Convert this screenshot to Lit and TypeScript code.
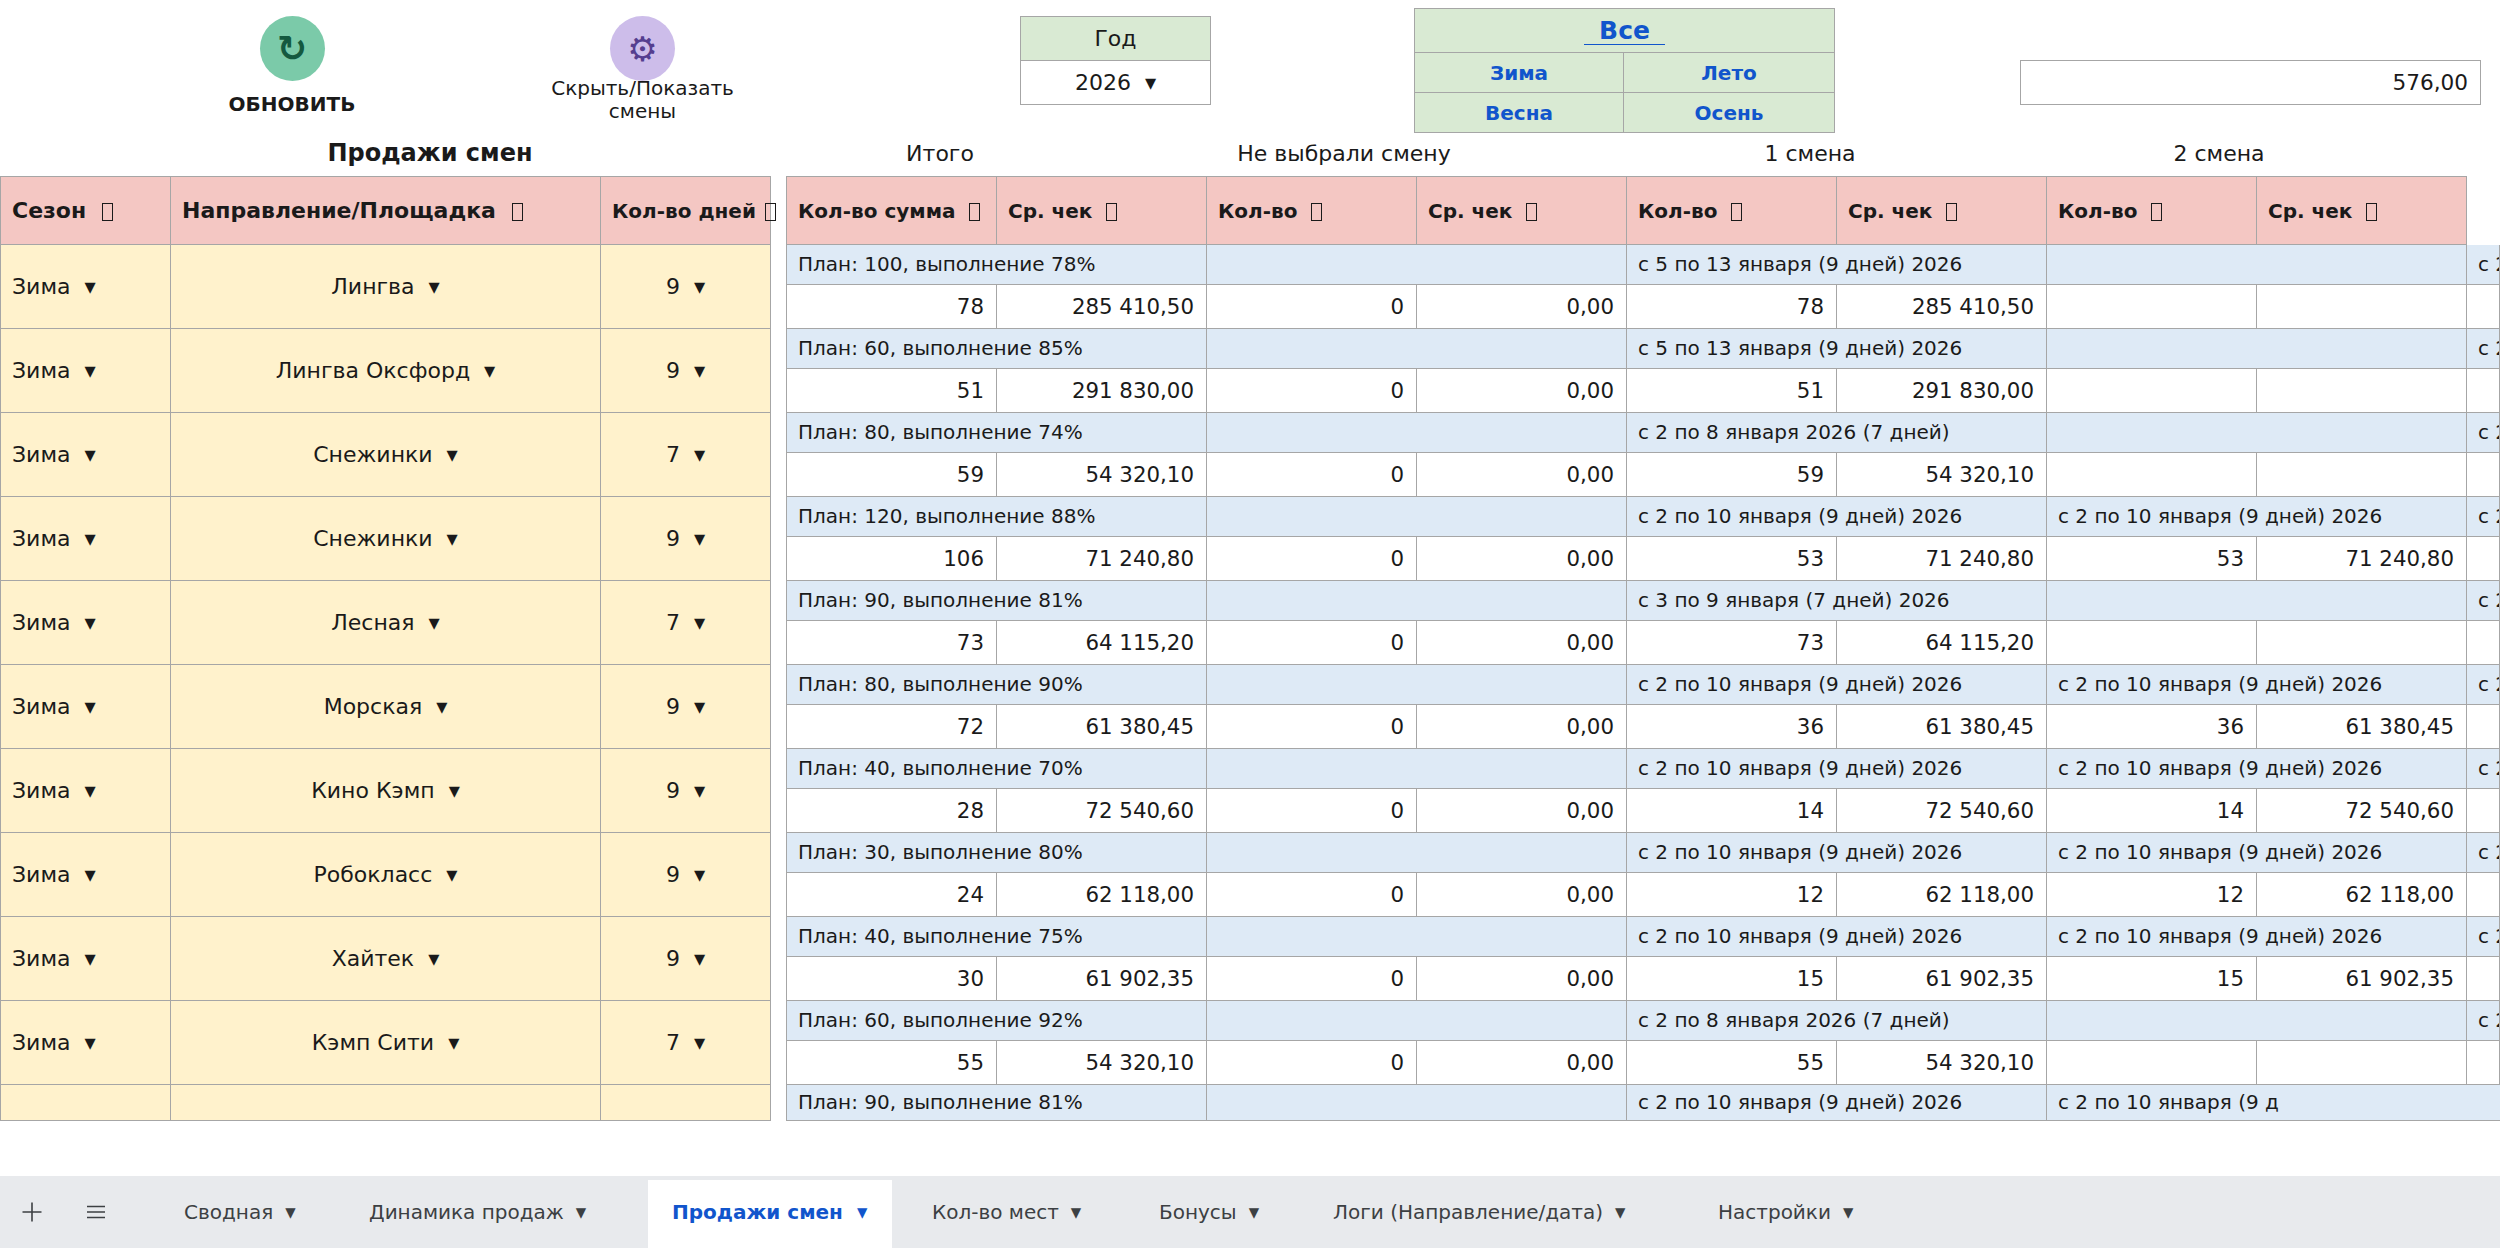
import { LitElement, html, css } from "lit";
import { customElement } from "lit/decorators.js";

type Row = { place: string; days: number; plan: number; pct: number; qty: number; avg: string; date: string; q1: number; q2?: number };
const D10 = "с 2 по 10 января (9 дней) 2026";
const D513 = "с 5 по 13 января (9 дней) 2026";
const D28 = "с 2 по 8 января 2026 (7 дней)";
const rows: Row[] = [
  { place: "Лингва", days: 9, plan: 100, pct: 78, qty: 78, avg: "285 410,50", date: D513, q1: 78 },
  { place: "Лингва Оксфорд", days: 9, plan: 60, pct: 85, qty: 51, avg: "291 830,00", date: D513, q1: 51 },
  { place: "Снежинки", days: 7, plan: 80, pct: 74, qty: 59, avg: "54 320,10", date: D28, q1: 59 },
  { place: "Снежинки", days: 9, plan: 120, pct: 88, qty: 106, avg: "71 240,80", date: D10, q1: 53, q2: 53 },
  { place: "Лесная", days: 7, plan: 90, pct: 81, qty: 73, avg: "64 115,20", date: "с 3 по 9 января (7 дней) 2026", q1: 73 },
  { place: "Морская", days: 9, plan: 80, pct: 90, qty: 72, avg: "61 380,45", date: D10, q1: 36, q2: 36 },
  { place: "Кино Кэмп", days: 9, plan: 40, pct: 70, qty: 28, avg: "72 540,60", date: D10, q1: 14, q2: 14 },
  { place: "Робокласс", days: 9, plan: 30, pct: 80, qty: 24, avg: "62 118,00", date: D10, q1: 12, q2: 12 },
  { place: "Хайтек", days: 9, plan: 40, pct: 75, qty: 30, avg: "61 902,35", date: D10, q1: 15, q2: 15 },
  { place: "Кэмп Сити", days: 7, plan: 60, pct: 92, qty: 55, avg: "54 320,10", date: D28, q1: 55 },
];
const tabs = ["Сводная", "Динамика продаж", "Продажи смен", "Кол-во мест", "Бонусы", "Логи (Направление/дата)", "Настройки"];

@customElement("app-root")
export class AppRoot extends LitElement {
  static styles = css`
    :host { display: block; width: 2500px; height: 1248px; overflow: hidden; background: #fff; font-family: "DejaVu Sans", sans-serif; font-size: 21.33px; color: #1a1a1a; }
    * { box-sizing: border-box; }
    .page { display: flex; flex-direction: column; height: 1248px; }

    .toolbar { display: grid; grid-template-columns: 184px 216px 142px 201px 277px 191px 203px 421px 185px 461px; height: 132px; flex: none; }
    .btn { display: flex; flex-direction: column; align-items: center; padding-top: 16px; text-align: center; }
    .btn.b1 { grid-column: 2; }
    .btn.b2 { grid-column: 4; }
    .circle { width: 65px; height: 65px; border-radius: 50%; display: flex; align-items: center; justify-content: center; flex: none; }
    .circle.green { background: #7bcaa9; color: #14593f; font-size: 36px; font-weight: 700; }
    .circle.violet { background: #cdbdea; color: #553e8f; font-size: 34px; }
    .lbl1 { font-weight: 700; font-size: 20px; line-height: 24px; margin-top: 11px; white-space: nowrap; }
    .lbl2 { font-size: 20px; line-height: 23px; margin-top: -4px; white-space: nowrap; }

    .year { grid-column: 6; margin-top: 16px; height: 89px; border: 1px solid #a6a6a6; display: grid; grid-template-rows: 44px 1fr; font-size: 22px; }
    .year div { display: flex; align-items: center; justify-content: center; }
    .year .h { background: #d9ead3; border-bottom: 1px solid #a6a6a6; }

    .season { grid-column: 8; margin-top: 8px; height: 125px; width: 421px; border: 1px solid #a6a6a6; background: #d9ead3; display: grid; grid-template-columns: 209px 1fr; grid-template-rows: 44px 40px 39px; color: #1155cc; font-weight: 700; font-size: 20px; }
    .season div { display: flex; align-items: center; justify-content: center; }
    .season .all { grid-column: 1 / 3; border-bottom: 1px solid #a6a6a6; align-items: flex-start; }
    .all span { display: block; width: 81px; height: 36px; padding-top: 4px; text-align: center; line-height: 36px; font-size: 25px; border-bottom: 1px solid #1155cc; }
    .season .br { border-right: 1px solid #a6a6a6; }
    .season .bb { border-bottom: 1px solid #a6a6a6; }

    .input { grid-column: 10; margin-top: 60px; height: 45px; border: 1px solid #a6a6a6; display: flex; align-items: center; justify-content: flex-end; padding-right: 12px; font-size: 21.6px; }

    .titles { display: flex; height: 44px; flex: none; align-items: center; text-align: center; font-size: 22px; padding-bottom: 2px; }
    .titles div { flex: none; }
    .t0 { width: 860px; font-weight: 700; font-size: 24px; }
    .t1 { width: 160px; }
    .t2 { width: 648px; }
    .t3 { width: 284px; }
    .t4 { width: 534px; }

    .tables { display: flex; flex: none; height: 945px; gap: 15px; }
    .left { flex: none; width: 771px; height: 945px; border-left: 1px solid #a6a6a6; display: grid; grid-template-columns: 170px 430px 170px; grid-template-rows: 69px repeat(10, 84px) 36px; font-size: 22px; }
    .right { flex: none; width: 1714px; height: 945px; border-left: 1px solid #a6a6a6; overflow: hidden; display: grid; grid-template-columns: repeat(8, 210px) 33px; grid-template-rows: 69px repeat(10, 40px 44px) 36px; }
    .c { border-right: 1px solid #a6a6a6; border-bottom: 1px solid #a6a6a6; display: flex; align-items: center; white-space: nowrap; min-width: 0; }
    .hd { background: #f4c7c3; border-top: 1px solid #a6a6a6; font-weight: 700; font-size: 20px; padding-left: 11px; white-space: pre; }
    .hd.big { font-size: 22px; }
    .tofu { display: inline-block; flex: none; width: 11px; height: 18px; border: 1px solid #1a1a1a; margin-top: 3px; }
    .hd .tofu { margin-left: 14px; }
    .hd.big .tofu { margin-left: 16px; }
    .hd.tight .tofu { margin-left: 9px; }
    .y { background: #fff2cc; }
    .pad { padding-left: 11px; }
    .mid { justify-content: center; }
    .arr { font-size: 14.5px; margin-left: 14px; }
    .plan { background: #deeaf6; font-size: 20px; padding-left: 11px; padding-bottom: 2px; overflow: hidden; grid-column: span 2; }
    .plan.one { grid-column: span 1; }
    .plan.open { grid-column: span 3; border-right: none; }
    .val { background: #fff; justify-content: flex-end; padding-right: 12px; }

    .bar { margin-top: auto; height: 72px; flex: none; background: #e8eaed; display: grid; grid-template-columns: 64px 64px 32px 185px 303px 260px 227px 174px 385px auto; color: #3c4043; font-size: 20px; }
    .bar > div { display: flex; align-items: center; white-space: nowrap; }
    .ic { justify-content: center; }
    .tab { padding-left: 24px; }
    .tab .arr { font-size: 13.5px; margin-left: 12px; }
    .bar > .tab.on { background: #fff; margin-top: 4px; width: 244px; padding-left: 24px; color: #1155cc; font-weight: 700; padding-bottom: 4px; }
    .bar > .tab.on .arr { margin-left: 14px; }
    svg { display: block; }
  `;

  head(t: string, cls = "") { return html`<div class="c hd ${cls}">${t}<span class="tofu"></span></div>`; }
  sel(t: string | number) { return html`${t}<span class="arr">▼</span>`; }

  render() {
    return html`<div class="page">
      <div class="toolbar">
        <div class="btn b1"><div class="circle green">↻</div><div class="lbl1">ОБНОВИТЬ</div></div>
        <div class="btn b2"><div class="circle violet">⚙</div><div class="lbl2">Скрыть/Показать<br />смены</div></div>
        <div class="year"><div class="h">Год</div><div>${this.sel(2026)}</div></div>
        <div class="season">
          <div class="all"><span>Все</span></div>
          <div class="br bb">Зима</div><div class="bb">Лето</div>
          <div class="br">Весна</div><div>Осень</div>
        </div>
        <div class="input">576,00</div>
      </div>
      <div class="titles">
        <div class="t0">Продажи смен</div><div class="t1">Итого</div><div class="t2">Не выбрали смену</div><div class="t3">1 смена</div><div class="t4">2 смена</div>
      </div>
      <div class="tables">
        <div class="left">
          ${this.head("Сезон", "big")}${this.head("Направление/Площадка", "big")}${this.head("Кол-во дней", "tight")}
          ${rows.map((r) => html`
            <div class="c y pad">${this.sel("Зима")}</div>
            <div class="c y mid">${this.sel(r.place)}</div>
            <div class="c y mid">${this.sel(r.days)}</div>`)}
          <div class="c y"></div><div class="c y"></div><div class="c y"></div>
        </div>
        <div class="right">
          ${["Кол-во сумма", "Ср. чек", "Кол-во", "Ср. чек", "Кол-во", "Ср. чек", "Кол-во", "Ср. чек"].map((t) => this.head(t))}
          <div></div>
          ${rows.map((r) => html`
            <div class="c plan">План: ${r.plan}, выполнение ${r.pct}%</div>
            <div class="c plan"></div>
            <div class="c plan">${r.date}</div>
            <div class="c plan">${r.q2 ? r.date : ""}</div>
            <div class="c plan one">${D10}</div>
            <div class="c val">${r.qty}</div><div class="c val">${r.avg}</div>
            <div class="c val">0</div><div class="c val">0,00</div>
            <div class="c val">${r.q1}</div><div class="c val">${r.avg}</div>
            <div class="c val">${r.q2 ?? ""}</div><div class="c val">${r.q2 ? r.avg : ""}</div>
            <div class="c val"></div>`)}
          <div class="c plan">План: 90, выполнение 81%</div>
          <div class="c plan"></div>
          <div class="c plan">${D10}</div>
          <div class="c plan open">с 2 по 10 января (9 д</div>
        </div>
      </div>
      <div class="bar">
        <div class="ic"><svg width="20" height="20" viewBox="0 0 20 20"><path d="M10 0.5V19.5M0.5 10H19.5" stroke="#3c4043" stroke-width="1.6" fill="none"/></svg></div>
        <div class="ic"><svg width="18" height="14" viewBox="0 0 18 14"><path d="M0 1.5H18M0 7H18M0 12.5H18" stroke="#3c4043" stroke-width="1.5" fill="none"/></svg></div>
        <div></div>
        ${tabs.map((t, i) => html`<div class="tab ${i === 2 ? "on" : ""}">${t}<span class="arr">▼</span></div>`)}
      </div>
    </div>`;
  }
}
